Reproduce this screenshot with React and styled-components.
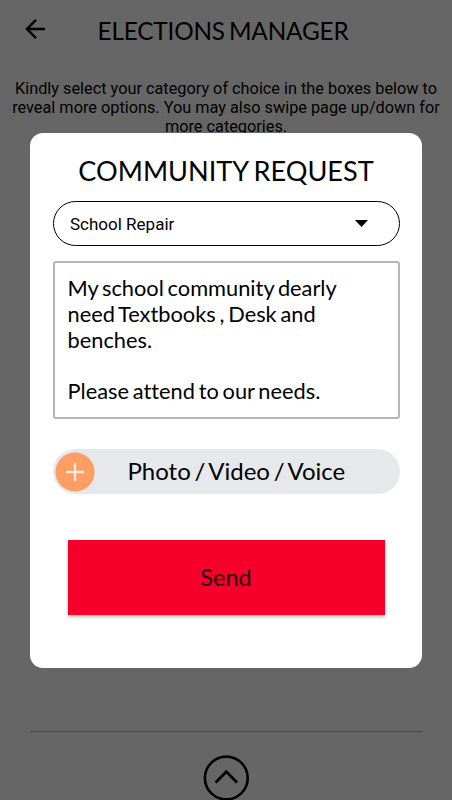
import React from "react";
import styled, { createGlobalStyle } from "styled-components";

const GlobalStyle = createGlobalStyle`
  *, *::before, *::after { box-sizing: border-box; }
  body { margin: 0; background: #666; color: #000; overflow: hidden; }
  button { font: inherit; color: inherit; border: 0; padding: 0; background: none; }
`;

const Screen = styled.main`
  position: relative;
  display: flex;
  flex-direction: column;
  height: 800px;
  width: 100%;
  overflow: hidden;
  background: #666;
  font-family: Roboto, sans-serif;
`;

const Header = styled.header`
  display: flex;
  align-items: center;
  height: 62px;
  padding-left: 23px;
`;

const BackButton = styled.button`
  display: flex;
  width: 24px;
  height: 24px;
  margin-top: -5px;
`;

const PageTitle = styled.h1`
  margin: 0 0 0 50.5px;
  font: 400 24.3px/30px Lato, sans-serif;
  letter-spacing: -0.15px;
  word-spacing: -2px;
  white-space: nowrap;
`;

const Intro = styled.p`
  margin: 17px 0 0;
  font-size: 16.3px;
  line-height: 19px;
  text-align: center;
  white-space: nowrap;
`;

const Footer = styled.footer`
  display: flex;
  flex-direction: column;
  align-items: center;
  margin: auto 30px 0;
  height: 69px;
  border-top: 1px solid #494949;
`;

const UpButton = styled.button`
  display: flex;
  margin-top: 23px;
`;

const Dialog = styled.section`
  position: absolute;
  top: 133px;
  left: 30px;
  width: 392px;
  height: 535px;
  padding: 21px 22.5px 0;
  display: flex;
  flex-direction: column;
  border-radius: 13px;
  background: #fff;
`;

const DialogTitle = styled.h2`
  margin: 0;
  font: 400 27.1px/34px Lato, sans-serif;
  word-spacing: -1.5px;
  text-align: center;
  white-space: nowrap;
`;

const Select = styled.button`
  display: flex;
  align-items: center;
  justify-content: space-between;
  height: 45px;
  margin-top: 13px;
  padding: 0 31px 0 16.5px;
  border: 1.4px solid #000;
  border-radius: 23px;
  font-size: 17px;
`;

const Message = styled.div`
  height: 158px;
  margin-top: 15px;
  padding: 12px 13px 0;
  border: 2px solid #b5b5b5;
  border-radius: 3px;
  font: 400 21.8px/25.8px Lato, sans-serif;
  font-variant-ligatures: none;
  word-spacing: -1.8px;
  white-space: pre;
`;

const Attach = styled.button`
  display: flex;
  align-items: center;
  height: 45px;
  margin-top: 30px;
  border-radius: 23px;
  background: #e6e8eb;
  font: 400 24px/30px Lato, sans-serif;
  word-spacing: -2.4px;
`;

const PlusBadge = styled.span`
  display: flex;
  margin: 0 33px 0 2px;
`;

const AttachLabel = styled.span`
  margin-top: -2px;
`;

const SendButton = styled.button`
  height: 75px;
  margin: 46px 15px 0;
  padding-bottom: 1px;
  background: #f6002b;
  color: #250006;
  font: 400 23.5px/30px Lato, sans-serif;
  box-shadow: 0 2px 3px rgba(0, 0, 0, 0.28);
`;

export default function App() {
  return (
    <Screen>
      <GlobalStyle />
      <Header>
        <BackButton aria-label="Back">
          <svg width="24" height="24" viewBox="0 0 24 24" fill="none" stroke="#000" strokeWidth="2.5">
            <path d="M22 12H4M13 2.8L4 12l9 9.2" />
          </svg>
        </BackButton>
        <PageTitle>ELECTIONS MANAGER</PageTitle>
      </Header>
      <Intro>
        Kindly select your category of choice in the boxes below to<br />
        reveal more options. You may also swipe page up/down for<br />
        more categories.
      </Intro>
      <Footer>
        <UpButton aria-label="Scroll up">
          <svg width="46" height="46" viewBox="0 0 46 46" fill="none" stroke="#000">
            <circle cx="23.3" cy="23" r="21.4" strokeWidth="2.6" />
            <path d="M12.6 27.5L23.3 16.8 34 27.5" strokeWidth="2.8" />
          </svg>
        </UpButton>
      </Footer>
      <Dialog role="dialog">
        <DialogTitle>COMMUNITY REQUEST</DialogTitle>
        <Select>
          School Repair
          <svg width="13" height="7" viewBox="0 0 13 7">
            <path d="M0 0h13L6.5 7z" />
          </svg>
        </Select>
        <Message>{"My school community dearly\nneed Textbooks , Desk and\nbenches.\n\nPlease attend to our needs."}</Message>
        <Attach>
          <PlusBadge>
            <svg width="40" height="40" viewBox="0 0 40 40">
              <circle cx="20" cy="20" r="19.6" fill="#fd9e65" />
              <path d="M11 20h18M20 11v18" stroke="#fbe9de" strokeWidth="2.4" />
            </svg>
          </PlusBadge>
          <AttachLabel>Photo / Video / Voice</AttachLabel>
        </Attach>
        <SendButton>Send</SendButton>
      </Dialog>
    </Screen>
  );
}
